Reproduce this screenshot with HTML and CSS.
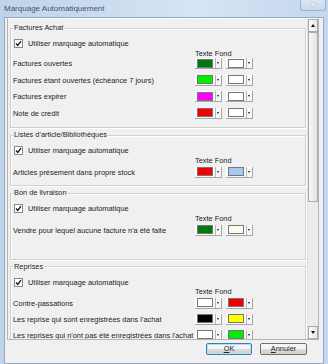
FILE: index.html
```html
<!DOCTYPE html>
<html lang="fr">
<head>
  <meta charset="UTF-8" />
  <title>Marquage Automatiquement</title>
  <link rel="stylesheet" href="styles.css">
</head>
<body>
  <div class="window">
    <div class="titlebar">
      <span class="title">Marquage Automatiquement</span>
      <span class="close">✕</span>
    </div>
    <div class="client">
      <div class="panel">
        <div class="content">
          <fieldset class="group first">
            <legend>Factures Achat</legend>
            <label class="check"><span class="box"><svg width="7" height="7" viewBox="0 0 7 7"><polyline points="1,3.5 2.8,5.5 6,1.2" fill="none" stroke="#1a1a1a" stroke-width="1.4"/></svg></span>Utiliser marquage automatique</label>
            <div class="grid">
              <span class="head">Texte Fond</span>
              <span class="label">Factures ouvertes</span>
              <span class="picker"><span class="swatch green"></span><span class="arrow"></span></span>
              <span class="picker"><span class="swatch white"></span><span class="arrow"></span></span>
              <span class="label">Factures étant ouvertes (échéance 7 jours)</span>
              <span class="picker"><span class="swatch lime"></span><span class="arrow"></span></span>
              <span class="picker"><span class="swatch white"></span><span class="arrow"></span></span>
              <span class="label">Factures expirer</span>
              <span class="picker"><span class="swatch magenta"></span><span class="arrow"></span></span>
              <span class="picker"><span class="swatch white"></span><span class="arrow"></span></span>
              <span class="label">Note de credit</span>
              <span class="picker"><span class="swatch red"></span><span class="arrow"></span></span>
              <span class="picker"><span class="swatch white"></span><span class="arrow"></span></span>
            </div>
          </fieldset>

          <fieldset class="group">
            <legend>Listes d'article/Bibliothéques</legend>
            <label class="check"><span class="box"><svg width="7" height="7" viewBox="0 0 7 7"><polyline points="1,3.5 2.8,5.5 6,1.2" fill="none" stroke="#1a1a1a" stroke-width="1.4"/></svg></span>Utiliser marquage automatique</label>
            <div class="grid">
              <span class="head">Texte Fond</span>
              <span class="label">Articles présement dans propre stock</span>
              <span class="picker"><span class="swatch red"></span><span class="arrow"></span></span>
              <span class="picker"><span class="swatch sky"></span><span class="arrow"></span></span>
            </div>
          </fieldset>

          <fieldset class="group tall">
            <legend>Bon de livraison</legend>
            <label class="check"><span class="box"><svg width="7" height="7" viewBox="0 0 7 7"><polyline points="1,3.5 2.8,5.5 6,1.2" fill="none" stroke="#1a1a1a" stroke-width="1.4"/></svg></span>Utiliser marquage automatique</label>
            <div class="grid">
              <span class="head">Texte Fond</span>
              <span class="label">Vendre pour lequel aucune facture n'a été faite</span>
              <span class="picker"><span class="swatch green"></span><span class="arrow"></span></span>
              <span class="picker"><span class="swatch ivory"></span><span class="arrow"></span></span>
            </div>
          </fieldset>

          <fieldset class="group last">
            <legend>Reprises</legend>
            <label class="check"><span class="box"><svg width="7" height="7" viewBox="0 0 7 7"><polyline points="1,3.5 2.8,5.5 6,1.2" fill="none" stroke="#1a1a1a" stroke-width="1.4"/></svg></span>Utiliser marquage automatique</label>
            <div class="grid">
              <span class="head">Texte Fond</span>
              <span class="label">Contre-passations</span>
              <span class="picker"><span class="swatch white"></span><span class="arrow"></span></span>
              <span class="picker"><span class="swatch red"></span><span class="arrow"></span></span>
              <span class="label">Les reprise qui sont enregistrées dans l'achat</span>
              <span class="picker"><span class="swatch black"></span><span class="arrow"></span></span>
              <span class="picker"><span class="swatch yellow"></span><span class="arrow"></span></span>
              <span class="label">Les reprises qui n'ont pas été enregistrées dans l'achat</span>
              <span class="picker"><span class="swatch white"></span><span class="arrow"></span></span>
              <span class="picker"><span class="swatch lime"></span><span class="arrow"></span></span>
            </div>
          </fieldset>
        </div>

        <div class="scrollbar">
          <span class="sb-btn"><span class="tri up"></span></span>
          <span class="thumb"></span>
          <span class="track"></span>
          <span class="sb-btn"><span class="tri down"></span></span>
        </div>
      </div>

      <div class="buttons">
        <button class="btn default"><u>O</u>K</button>
        <button class="btn"><u>A</u>nnuler</button>
      </div>
    </div>
  </div>
</body>
</html>
```

FILE: styles.css
```css
body {
  margin: 0;
  background: #c8d9ee;
  font-family: "Liberation Sans", Arial, sans-serif;
  color: #222;
}
.window {
  width: 328px;
  height: 364px;
  box-sizing: border-box;
  padding: 0 4px 4px;
  background: linear-gradient(to right, #c0d3ea, #d6e4f4 60%, #c4d7ee);
}
.titlebar {
  height: 17px;
  display: flex;
  align-items: flex-start;
  justify-content: space-between;
}
.title {
  font-size: 8px;
  line-height: 9px;
  margin-top: 4px;
  color: #44546c;
}
.close {
  width: 24px;
  height: 10px;
  margin-right: -2px;
  border: 1px solid #9fb2ca;
  border-top: none;
  border-radius: 0 0 3px 3px;
  background: linear-gradient(#dbe6f3, #c9d8ea);
  color: #f4f7fb;
  font-size: 7px;
  line-height: 10px;
  text-align: center;
  font-weight: bold;
  text-shadow: 0 0 1px #7d8ea6;
}
.client {
  height: 347px;
  box-sizing: border-box;
  border: 1px solid #93a8c2;
  background: #f0f0f0;
  padding: 0 4px 4px 2px;
  display: flex;
  flex-direction: column;
}
.panel {
  height: 322px;
  flex: none;
  box-sizing: border-box;
  border: 1px solid #b4b4b4;
  border-top-color: #fdfdfd;
  background: #f0f0f0;
  display: flex;
  overflow: hidden;
}
.content {
  flex: 1;
  padding: 4px 1px 0 2px;
  font-size: 7.4px;
}
.group {
  margin: 0 0 2px;
  padding: 0 2px 4.75px;
  border: 1px solid #d0d0d0;
  box-shadow: inset 1px 1px 0 #fff, 1px 1px 0 #fff;
}
.group.first {
  padding-bottom: 5.75px;
}
.group.first .grid {
  grid-template-rows: 7px;
}
.group.tall {
  padding-bottom: 20px;
}
.group.last .grid {
  grid-auto-rows: 16px;
}
.group legend {
  padding: 0 1px;
  line-height: 10px;
}
.check {
  display: flex;
  align-items: center;
  height: 10px;
  margin-top: 5.5px;
}
.box {
  width: 7px;
  height: 7px;
  margin: 0 5px 0 1px;
  background: #fff;
  border: 1px solid #8a8a8a;
  display: flex;
}
.grid {
  display: grid;
  grid-template-columns: 182px 31px 31px;
  grid-template-rows: 8.25px;
  grid-auto-rows: 16.5px;
}
.grid .head {
  grid-column: 2 / 4;
  white-space: nowrap;
  line-height: 10px;
}
.label {
  grid-column: 1;
  white-space: nowrap;
  align-self: center;
}
.picker {
  align-self: center;
  width: 26px;
  height: 10px;
  display: flex;
  align-items: center;
  background: #f6f6f6;
  border-right: 1px solid #a8a8a8;
  border-bottom: 1px solid #a8a8a8;
  box-shadow: inset 1px 1px 0 #fff;
}
.swatch {
  width: 15px;
  height: 7px;
  margin-left: 2px;
  border: 1px solid #777;
}
.arrow {
  width: 5px;
  height: 10px;
  margin-left: 2px;
  border-left: 1px solid #b8b8b8;
  position: relative;
}
.arrow::after {
  content: "";
  position: absolute;
  left: 1px;
  top: 4px;
  border: 1.5px solid transparent;
  border-top: 2px solid #111;
}
.green { background: #007a0e; }
.lime { background: #00ee00; }
.magenta { background: #ff00ff; }
.red { background: #f00000; }
.white { background: #fff; }
.sky { background: #a9c9f0; }
.ivory { background: #fdfdeb; }
.black { background: #000; }
.yellow { background: #ffff00; }

.scrollbar {
  width: 10px;
  display: flex;
  flex-direction: column;
  background: #ececec;
  border-left: 1px solid #e0e0e0;
}
.sb-btn {
  height: 13px;
  flex: none;
  display: flex;
  align-items: center;
  justify-content: center;
  background: linear-gradient(to right, #fdfdfd, #e6e6e6);
  border: 1px solid #a9a9a9;
  box-sizing: border-box;
}
.thumb {
  height: 170px;
  flex: none;
  box-sizing: border-box;
  border: 1px solid #aaa;
  background: linear-gradient(to right, #f6f6f6, #e3e3e3);
}
.track {
  flex: 1;
}
.tri {
  border: 2.5px solid transparent;
}
.tri.up {
  border-bottom: 3px solid #111;
  border-top-width: 0;
}
.tri.down {
  border-top: 3px solid #111;
  border-bottom-width: 0;
}
.buttons {
  display: flex;
  justify-content: flex-end;
  gap: 8px;
  margin-top: 3px;
  padding-right: 12px;
}
.btn {
  width: 47px;
  height: 12px;
  padding: 0;
  font-family: "Liberation Sans", Arial, sans-serif;
  font-size: 7.4px;
  line-height: 10px;
  color: #222;
  border: 1px solid #707070;
  border-radius: 2px;
  background: linear-gradient(#f6f6f6 50%, #dddddd 50%, #cfcfcf);
}
.btn.default {
  width: 46px;
  border-color: #3c7fb1;
  box-shadow: inset 0 0 0 1px #aee0f8;
}
```
